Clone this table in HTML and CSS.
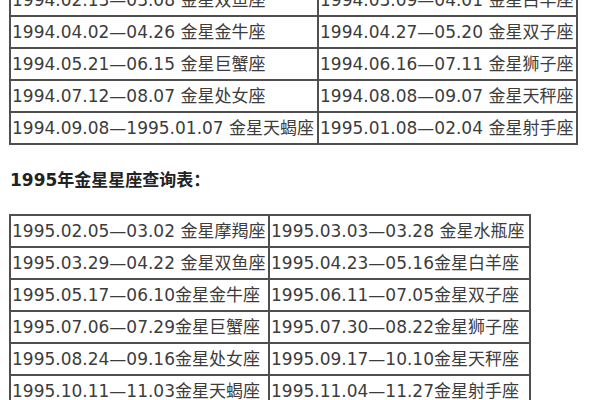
FILE: index.html
```html
<!DOCTYPE html>
<html lang="zh">
<head>
<meta charset="utf-8">
<link rel="stylesheet" href="styles.css">
</head>
<body>
<div class="page">
  <table class="tbl tbl-1994">
    <tr><td class="c1">1994.02.13—03.08 金星双鱼座</td><td class="c2">1994.03.09—04.01 金星白羊座</td></tr>
    <tr><td>1994.04.02—04.26 金星金牛座</td><td>1994.04.27—05.20 金星双子座</td></tr>
    <tr><td>1994.05.21—06.15 金星巨蟹座</td><td>1994.06.16—07.11 金星狮子座</td></tr>
    <tr><td>1994.07.12—08.07 金星处女座</td><td>1994.08.08—09.07 金星天秤座</td></tr>
    <tr><td>1994.09.08—1995.01.07 金星天蝎座</td><td>1995.01.08—02.04 金星射手座</td></tr>
  </table>
  <p class="heading">1995年金星星座查询表：</p>
  <table class="tbl tbl-1995">
    <tr><td class="c1">1995.02.05—03.02 金星摩羯座</td><td class="c2">1995.03.03—03.28 金星水瓶座</td></tr>
    <tr><td>1995.03.29—04.22 金星双鱼座</td><td>1995.04.23—05.16金星白羊座</td></tr>
    <tr><td>1995.05.17—06.10金星金牛座</td><td>1995.06.11—07.05金星双子座</td></tr>
    <tr><td>1995.07.06—07.29金星巨蟹座</td><td>1995.07.30—08.22金星狮子座</td></tr>
    <tr><td>1995.08.24—09.16金星处女座</td><td>1995.09.17—10.10金星天秤座</td></tr>
    <tr><td>1995.10.11—11.03金星天蝎座</td><td>1995.11.04—11.27金星射手座</td></tr>
  </table>
</div>
</body>
</html>
```
FILE: styles.css
```css
html, body {
  margin: 0;
  padding: 0;
  background: #fff;
}
.page {
  padding-left: 9px;
  margin-top: -17px;
  font-family: "DejaVu Sans", "Noto Sans CJK SC", sans-serif;
  color: #3c3c3c;
}
.tbl {
  border: 1px solid #4f4f4f;
  border-spacing: 0;
  table-layout: fixed;
  font-size: 17px;
}
.tbl td {
  box-sizing: border-box;
  border: 1px solid #4f4f4f;
  height: 32px;
  padding: 0 0 0 1px;
  white-space: nowrap;
  overflow: hidden;
  line-height: 30px;
  vertical-align: middle;
}
.tbl-1994 { width: 569px; }
.tbl-1994 .c1 { width: 308px; }
.tbl-1994 .c2 { width: 259px; }
.tbl-1995 { width: 522px; }
.tbl-1995 .c1 { width: 259px; }
.tbl-1995 .c2 { width: 261px; }
.heading {
  margin: 23px 0 22px 1px;
  font-family: "DejaVu Sans", "Noto Sans CJK SC", sans-serif;
  font-weight: bold;
  font-size: 17px;
  line-height: 24px;
  color: #222;
}
```
